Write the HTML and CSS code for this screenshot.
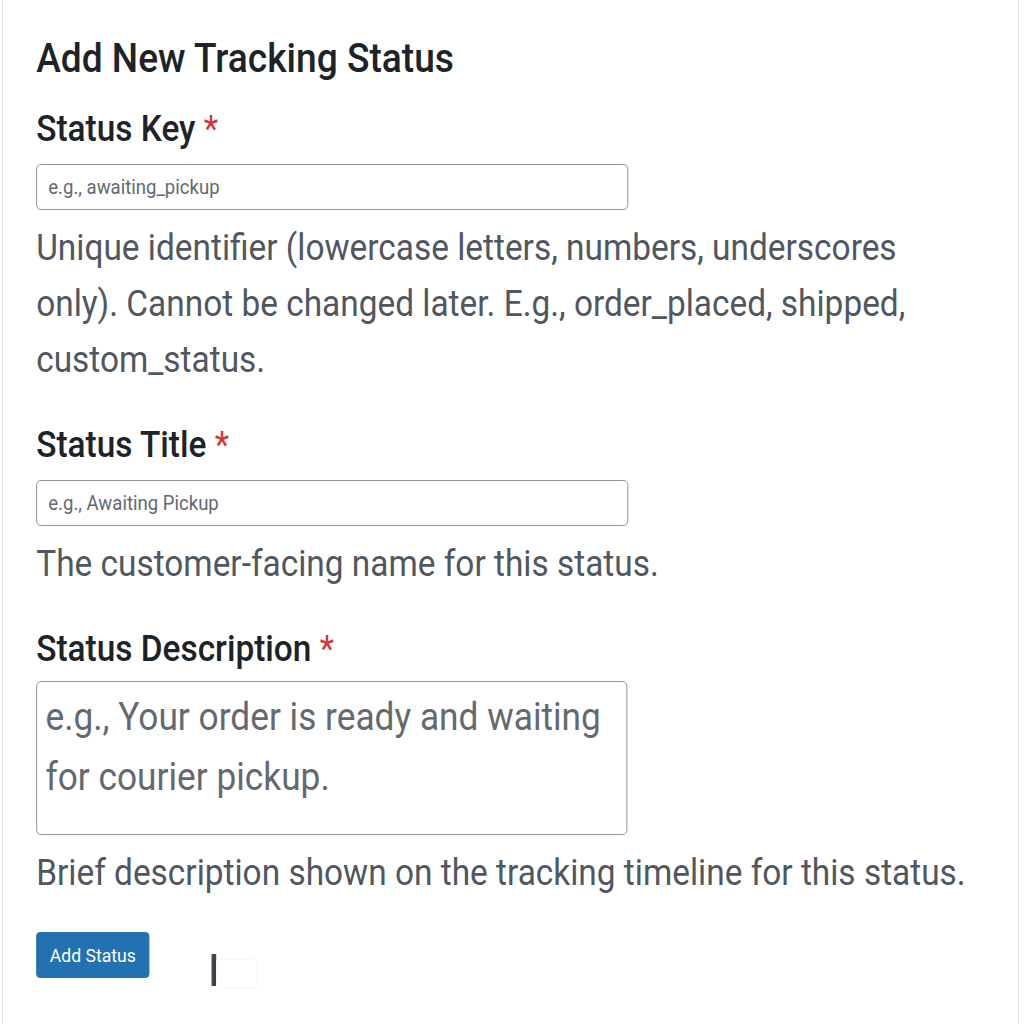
FILE: index.html
```html
<!DOCTYPE html>
<html lang="en">
<head>
<meta charset="utf-8">
<title>Add New Tracking Status</title>
<link rel="stylesheet" href="styles.css">
</head>
<body>
<div class="viewport">
  <div class="page">
    <div class="card">
      <h2 class="title">Add New Tracking Status</h2>
      <form class="form">
        <div class="field">
          <label class="label" for="status-key">Status Key <span class="req">*</span></label>
          <input class="input" id="status-key" type="text" placeholder="e.g., awaiting_pickup">
          <p class="desc">Unique identifier (lowercase letters, numbers, underscores only). Cannot be changed later. E.g., order_placed, shipped, custom_status.</p>
        </div>
        <div class="field">
          <label class="label" for="status-title">Status Title <span class="req">*</span></label>
          <input class="input" id="status-title" type="text" placeholder="e.g., Awaiting Pickup">
          <p class="desc">The customer-facing name for this status.</p>
        </div>
        <div class="field">
          <label class="label label-tight" for="status-desc">Status Description <span class="req">*</span></label>
          <textarea class="textarea" id="status-desc" placeholder="e.g., Your order is ready and waiting for courier pickup."></textarea>
          <p class="desc">Brief description shown on the tracking timeline for this status.</p>
        </div>
        <div class="actions">
          <button class="button" type="button">Add Status</button>
          <span class="cursor"></span>
          <span class="ghost"></span>
        </div>
      </form>
    </div>
  </div>
</div>
</body>
</html>
```
FILE: styles.css
```css
html, body {
  margin: 0;
  padding: 0;
  background: #ffffff;
  overflow: hidden;
}

.viewport {
  width: 1024px;
  height: 1024px;
  overflow: hidden;
}

.page {
  width: 1103px;
  box-sizing: border-box;
  padding: 0 5px 0 2px;
  transform: scaleX(0.928);
  transform-origin: 0 0;
  font-family: Roboto, "Liberation Sans", sans-serif;
}

.card {
  border: 1px solid #dcdcde;
  border-top: none;
  border-radius: 0 0 2px 2px;
  background: #fff;
  padding: 33px 46px 45px 36px;
}

.title {
  margin: 0;
  font-size: 40px;
  line-height: 52px;
  font-weight: 500;
  color: #1d2327;
}

.form {
  margin-top: 20px;
  display: flex;
  flex-direction: column;
}

.field {
  display: flex;
  flex-direction: column;
  align-items: flex-start;
  margin-bottom: 33px;
}

.label {
  font-size: 36px;
  line-height: 48px;
  font-weight: 500;
  color: #1d2327;
  margin-bottom: 11px;
}

.label-tight {
  margin-bottom: 8px;
}

.req {
  color: #d63638;
  font-weight: 400;
}

.input {
  width: 638px;
  height: 46px;
  box-sizing: border-box;
  border: 1px solid #8c8f94;
  border-radius: 5px;
  padding: 0 12px;
  font-family: Roboto, "Liberation Sans", sans-serif;
  font-size: 20px;
  color: #2c3338;
  background: #fff;
  margin: 0;
}

.input::placeholder {
  color: #646970;
  opacity: 1;
}

.textarea {
  width: 637px;
  height: 154px;
  box-sizing: border-box;
  border: 1px solid #8c8f94;
  border-radius: 5px;
  padding: 5px 9px 2px;
  font-family: Roboto, "Liberation Sans", sans-serif;
  font-size: 38px;
  line-height: 60px;
  color: #2c3338;
  background: #fff;
  resize: none;
  margin: 0;
}

.textarea::placeholder {
  color: #646970;
  opacity: 1;
}

.desc {
  margin: 10px 0 0;
  font-size: 36px;
  line-height: 56px;
  color: #50575e;
}

.actions {
  display: flex;
  align-items: flex-start;
  margin-top: -2px;
}

.button {
  width: 122px;
  height: 46px;
  border: 1px solid #2271b1;
  border-radius: 4px;
  background: #2271b1;
  color: #fff;
  font-family: Roboto, "Liberation Sans", sans-serif;
  font-size: 19px;
  padding: 0;
  cursor: pointer;
}

.cursor {
  width: 5px;
  height: 32px;
  margin: 22px 0 0 67px;
  background: #3c434a;
}

.ghost {
  width: 43px;
  height: 27px;
  margin-top: 28px;
  background: #fff;
  box-shadow: 0 0 2px rgba(0, 0, 0, 0.08);
}
```
